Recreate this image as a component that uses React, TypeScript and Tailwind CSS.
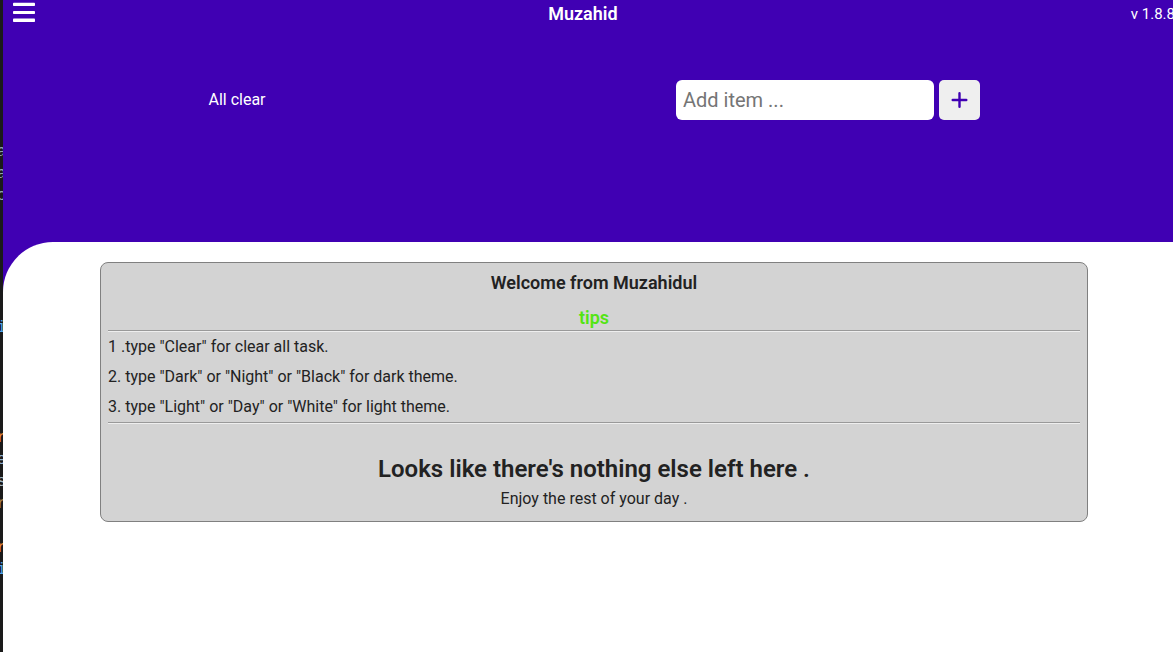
import { useState } from "react";

const codeLines: { text: string; color: string }[] = [
  { text: "", color: "text-slate-400" },
  { text: "", color: "text-slate-400" },
  { text: "", color: "text-slate-400" },
  { text: "", color: "text-slate-400" },
  { text: "", color: "text-slate-400" },
  { text: "", color: "text-slate-400" },
  { text: "a", color: "text-[#8fa3ad]" },
  { text: "a", color: "text-[#8fa3ad]" },
  { text: "c", color: "text-[#8fa3ad]" },
  { text: "", color: "text-slate-400" },
  { text: "", color: "text-slate-400" },
  { text: "", color: "text-slate-400" },
  { text: "", color: "text-slate-400" },
  { text: "", color: "text-slate-400" },
  { text: "i", color: "text-[#4fa3e8]" },
  { text: "", color: "text-slate-400" },
  { text: "", color: "text-slate-400" },
  { text: "", color: "text-slate-400" },
  { text: "", color: "text-slate-400" },
  { text: "r", color: "text-[#e58a35]" },
  { text: "e", color: "text-[#8fb0cc]" },
  { text: "s", color: "text-[#9fb3bd]" },
  { text: "r", color: "text-[#a58347]" },
  { text: "", color: "text-slate-400" },
  { text: "r", color: "text-[#e58a35]" },
  { text: "i", color: "text-[#4fa3e8]" },
];

function EditorEdge() {
  return (
    <div
      aria-hidden="true"
      className="w-[3px] shrink-0 overflow-hidden bg-[#1a1a1a] pt-[9px] font-['Liberation_Mono',monospace] text-base"
    >
      {codeLines.map((line, i) => (
        <div key={i} className={`flex h-[22px] items-center justify-center ${line.color}`}>
          {line.text}
        </div>
      ))}
    </div>
  );
}

function Rule() {
  return <hr className="h-0.5 border-t border-b border-t-[#999999] border-b-[#eeeeee]" />;
}

export default function App() {
  const [item, setItem] = useState("");

  return (
    <div className="flex min-h-screen overflow-hidden font-['Roboto',sans-serif] text-base text-[#222222]">
      <EditorEdge />
      <div className="min-w-0 flex-1 overflow-hidden bg-[#4000b3]">
        <div className="flex min-h-screen w-[calc(100%+12px)] flex-col">
          <header className="h-[242px] text-white">
            <div className="flex h-7 items-center justify-between px-2.5">
              <button type="button" aria-label="Menu" className="pb-1">
                <svg width="22" height="20" viewBox="0 0 22 20" fill="currentColor">
                  <rect x="0" y="0.8" width="22" height="3.2" rx="0.8" />
                  <rect x="0" y="8.9" width="22" height="3.2" rx="0.8" />
                  <rect x="0" y="16.6" width="22" height="3.4" rx="0.8" />
                </svg>
              </button>
              <h1 className="text-lg font-semibold">Muzahid</h1>
              <span className="text-[15px]">v 1.8.8</span>
            </div>
            <div className="grid grid-cols-2 pt-[52px]">
              <div className="flex items-center justify-center pr-[123px]">
                <button type="button">All clear</button>
              </div>
              <form
                className="flex items-center justify-center gap-[5px] pr-[123px]"
                onSubmit={(e) => e.preventDefault()}
              >
                <input
                  type="text"
                  aria-label="Add item"
                  placeholder="Add item ..."
                  value={item}
                  onChange={(e) => setItem(e.target.value)}
                  className="h-10 w-[258px] rounded-md bg-white px-[7px] text-xl text-[#222222] placeholder:text-[#757575]"
                />
                <button
                  type="submit"
                  aria-label="Add"
                  className="flex h-10 w-[41px] items-center justify-center rounded-[5px] bg-[#efefef] text-[#4000b3]"
                >
                  <svg
                    width="17"
                    height="16"
                    viewBox="0 0 17 16"
                    fill="none"
                    stroke="currentColor"
                    strokeWidth="2.4"
                    strokeLinecap="round"
                  >
                    <path d="M8.5 1.2v13.6M1.7 8h13.6" />
                  </svg>
                </button>
              </form>
            </div>
          </header>
          <main className="flex-1 rounded-tl-[50px] bg-white px-[97px] pt-5">
            <section className="rounded-lg border border-[#808080] bg-[#d3d3d3] px-[7px] pb-2">
              <h2 className="pt-1.5 text-center text-lg font-semibold">Welcome from Muzahidul</h2>
              <h3 className="pt-[9px] text-center text-lg leading-6 font-semibold text-[#53e413]">tips</h3>
              <Rule />
              <ol className="leading-[30px]">
                <li>1 .type "Clear" for clear all task.</li>
                <li>2. type "Dark" or "Night" or "Black" for dark theme.</li>
                <li>3. type "Light" or "Day" or "White" for light theme.</li>
              </ol>
              <Rule />
              <div className="pt-[29px] text-center">
                <h2 className="text-2xl font-semibold">Looks like there's nothing else left here .</h2>
                <p className="leading-7">Enjoy the rest of your day .</p>
              </div>
            </section>
          </main>
        </div>
      </div>
    </div>
  );
}
